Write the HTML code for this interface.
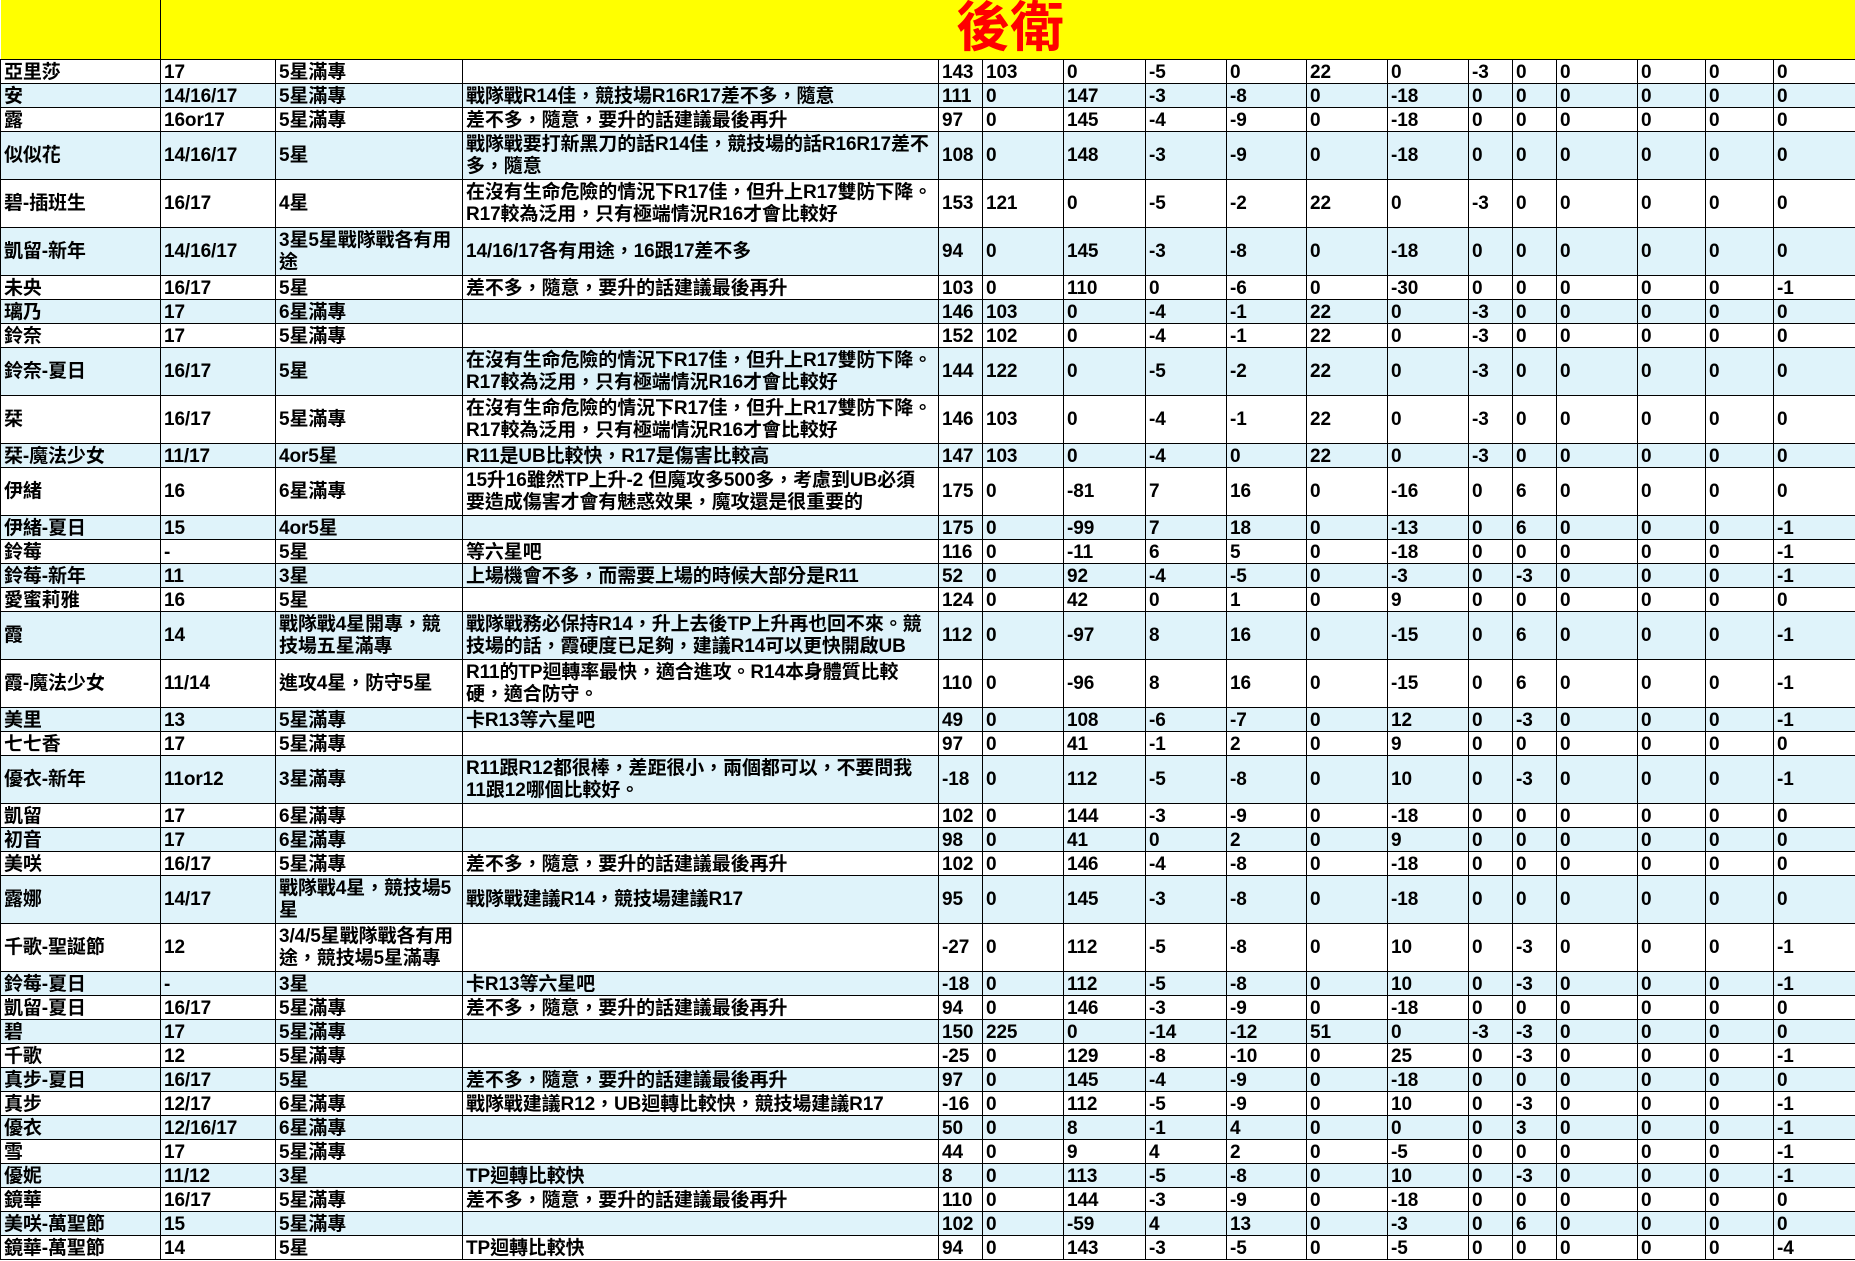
<!DOCTYPE html>
<html><head><meta charset="utf-8"><style>
html,body{margin:0;padding:0;background:#fff;}
body{width:1855px;height:1261px;overflow:hidden;font-family:"Liberation Sans","Noto Sans CJK TC",sans-serif;font-weight:bold;font-size:19px;color:#000;position:relative}
table{border-collapse:collapse;table-layout:fixed;width:1855px;}
td{border:1px solid #000;padding:0 0 0 3px;height:23px;line-height:21px;vertical-align:bottom;white-space:nowrap;overflow:hidden;letter-spacing:-0.1px}
tr.d td{height:47px;vertical-align:middle;}
tr.d td.t{line-height:22px;vertical-align:middle}
tr:nth-child(odd) td{background:#dff3fa}
tr.h td{background:#ffff00;height:59px;border-top:none;}
.title{color:#ff0000;font-size:54px;line-height:60px;position:absolute;left:956px;top:-2px;letter-spacing:0;z-index:5}
</style></head><body>
<div class="title">後衛</div>
<table>
<colgroup><col style="width:160px"><col style="width:115px"><col style="width:187px"><col style="width:476px"><col style="width:44px"><col style="width:81px"><col style="width:82px"><col style="width:81px"><col style="width:80px"><col style="width:81px"><col style="width:81px"><col style="width:44px"><col style="width:44px"><col style="width:81px"><col style="width:68px"><col style="width:68px"><col style="width:82px"></colgroup>
<tr class="h"><td style="border-left:none"></td><td colspan="16" style="border-right:none"></td></tr>
<tr><td>亞里莎</td><td>17</td><td>5星滿專</td><td></td><td>143</td><td>103</td><td>0</td><td>-5</td><td>0</td><td>22</td><td>0</td><td>-3</td><td>0</td><td>0</td><td>0</td><td>0</td><td>0</td></tr>
<tr><td>安</td><td>14/16/17</td><td>5星滿專</td><td>戰隊戰R14佳，競技場R16R17差不多，隨意</td><td>111</td><td>0</td><td>147</td><td>-3</td><td>-8</td><td>0</td><td>-18</td><td>0</td><td>0</td><td>0</td><td>0</td><td>0</td><td>0</td></tr>
<tr><td>露</td><td>16or17</td><td>5星滿專</td><td>差不多，隨意，要升的話建議最後再升</td><td>97</td><td>0</td><td>145</td><td>-4</td><td>-9</td><td>0</td><td>-18</td><td>0</td><td>0</td><td>0</td><td>0</td><td>0</td><td>0</td></tr>
<tr class="d"><td>似似花</td><td>14/16/17</td><td>5星</td><td class="t">戰隊戰要打新黑刀的話R14佳，競技場的話R16R17差不<br>多，隨意</td><td>108</td><td>0</td><td>148</td><td>-3</td><td>-9</td><td>0</td><td>-18</td><td>0</td><td>0</td><td>0</td><td>0</td><td>0</td><td>0</td></tr>
<tr class="d"><td>碧-插班生</td><td>16/17</td><td>4星</td><td class="t">在沒有生命危險的情況下R17佳，但升上R17雙防下降。<br>R17較為泛用，只有極端情況R16才會比較好</td><td>153</td><td>121</td><td>0</td><td>-5</td><td>-2</td><td>22</td><td>0</td><td>-3</td><td>0</td><td>0</td><td>0</td><td>0</td><td>0</td></tr>
<tr class="d"><td>凱留-新年</td><td>14/16/17</td><td class="t">3星5星戰隊戰各有用<br>途</td><td>14/16/17各有用途，16跟17差不多</td><td>94</td><td>0</td><td>145</td><td>-3</td><td>-8</td><td>0</td><td>-18</td><td>0</td><td>0</td><td>0</td><td>0</td><td>0</td><td>0</td></tr>
<tr><td>未央</td><td>16/17</td><td>5星</td><td>差不多，隨意，要升的話建議最後再升</td><td>103</td><td>0</td><td>110</td><td>0</td><td>-6</td><td>0</td><td>-30</td><td>0</td><td>0</td><td>0</td><td>0</td><td>0</td><td>-1</td></tr>
<tr><td>璃乃</td><td>17</td><td>6星滿專</td><td></td><td>146</td><td>103</td><td>0</td><td>-4</td><td>-1</td><td>22</td><td>0</td><td>-3</td><td>0</td><td>0</td><td>0</td><td>0</td><td>0</td></tr>
<tr><td>鈴奈</td><td>17</td><td>5星滿專</td><td></td><td>152</td><td>102</td><td>0</td><td>-4</td><td>-1</td><td>22</td><td>0</td><td>-3</td><td>0</td><td>0</td><td>0</td><td>0</td><td>0</td></tr>
<tr class="d"><td>鈴奈-夏日</td><td>16/17</td><td>5星</td><td class="t">在沒有生命危險的情況下R17佳，但升上R17雙防下降。<br>R17較為泛用，只有極端情況R16才會比較好</td><td>144</td><td>122</td><td>0</td><td>-5</td><td>-2</td><td>22</td><td>0</td><td>-3</td><td>0</td><td>0</td><td>0</td><td>0</td><td>0</td></tr>
<tr class="d"><td>栞</td><td>16/17</td><td>5星滿專</td><td class="t">在沒有生命危險的情況下R17佳，但升上R17雙防下降。<br>R17較為泛用，只有極端情況R16才會比較好</td><td>146</td><td>103</td><td>0</td><td>-4</td><td>-1</td><td>22</td><td>0</td><td>-3</td><td>0</td><td>0</td><td>0</td><td>0</td><td>0</td></tr>
<tr><td>栞-魔法少女</td><td>11/17</td><td>4or5星</td><td>R11是UB比較快，R17是傷害比較高</td><td>147</td><td>103</td><td>0</td><td>-4</td><td>0</td><td>22</td><td>0</td><td>-3</td><td>0</td><td>0</td><td>0</td><td>0</td><td>0</td></tr>
<tr class="d"><td>伊緒</td><td>16</td><td>6星滿專</td><td class="t">15升16雖然TP上升-2 但魔攻多500多，考慮到UB必須<br>要造成傷害才會有魅惑效果，魔攻還是很重要的</td><td>175</td><td>0</td><td>-81</td><td>7</td><td>16</td><td>0</td><td>-16</td><td>0</td><td>6</td><td>0</td><td>0</td><td>0</td><td>0</td></tr>
<tr><td>伊緒-夏日</td><td>15</td><td>4or5星</td><td></td><td>175</td><td>0</td><td>-99</td><td>7</td><td>18</td><td>0</td><td>-13</td><td>0</td><td>6</td><td>0</td><td>0</td><td>0</td><td>-1</td></tr>
<tr><td>鈴莓</td><td>-</td><td>5星</td><td>等六星吧</td><td>116</td><td>0</td><td>-11</td><td>6</td><td>5</td><td>0</td><td>-18</td><td>0</td><td>0</td><td>0</td><td>0</td><td>0</td><td>-1</td></tr>
<tr><td>鈴莓-新年</td><td>11</td><td>3星</td><td>上場機會不多，而需要上場的時候大部分是R11</td><td>52</td><td>0</td><td>92</td><td>-4</td><td>-5</td><td>0</td><td>-3</td><td>0</td><td>-3</td><td>0</td><td>0</td><td>0</td><td>-1</td></tr>
<tr><td>愛蜜莉雅</td><td>16</td><td>5星</td><td></td><td>124</td><td>0</td><td>42</td><td>0</td><td>1</td><td>0</td><td>9</td><td>0</td><td>0</td><td>0</td><td>0</td><td>0</td><td>0</td></tr>
<tr class="d"><td>霞</td><td>14</td><td class="t">戰隊戰4星開專，競<br>技場五星滿專</td><td class="t">戰隊戰務必保持R14，升上去後TP上升再也回不來。競<br>技場的話，霞硬度已足夠，建議R14可以更快開啟UB</td><td>112</td><td>0</td><td>-97</td><td>8</td><td>16</td><td>0</td><td>-15</td><td>0</td><td>6</td><td>0</td><td>0</td><td>0</td><td>-1</td></tr>
<tr class="d"><td>霞-魔法少女</td><td>11/14</td><td>進攻4星，防守5星</td><td class="t">R11的TP迴轉率最快，適合進攻。R14本身體質比較<br>硬，適合防守。</td><td>110</td><td>0</td><td>-96</td><td>8</td><td>16</td><td>0</td><td>-15</td><td>0</td><td>6</td><td>0</td><td>0</td><td>0</td><td>-1</td></tr>
<tr><td>美里</td><td>13</td><td>5星滿專</td><td>卡R13等六星吧</td><td>49</td><td>0</td><td>108</td><td>-6</td><td>-7</td><td>0</td><td>12</td><td>0</td><td>-3</td><td>0</td><td>0</td><td>0</td><td>-1</td></tr>
<tr><td>七七香</td><td>17</td><td>5星滿專</td><td></td><td>97</td><td>0</td><td>41</td><td>-1</td><td>2</td><td>0</td><td>9</td><td>0</td><td>0</td><td>0</td><td>0</td><td>0</td><td>0</td></tr>
<tr class="d"><td>優衣-新年</td><td>11or12</td><td>3星滿專</td><td class="t">R11跟R12都很棒，差距很小，兩個都可以，不要問我<br>11跟12哪個比較好。</td><td>-18</td><td>0</td><td>112</td><td>-5</td><td>-8</td><td>0</td><td>10</td><td>0</td><td>-3</td><td>0</td><td>0</td><td>0</td><td>-1</td></tr>
<tr><td>凱留</td><td>17</td><td>6星滿專</td><td></td><td>102</td><td>0</td><td>144</td><td>-3</td><td>-9</td><td>0</td><td>-18</td><td>0</td><td>0</td><td>0</td><td>0</td><td>0</td><td>0</td></tr>
<tr><td>初音</td><td>17</td><td>6星滿專</td><td></td><td>98</td><td>0</td><td>41</td><td>0</td><td>2</td><td>0</td><td>9</td><td>0</td><td>0</td><td>0</td><td>0</td><td>0</td><td>0</td></tr>
<tr><td>美咲</td><td>16/17</td><td>5星滿專</td><td>差不多，隨意，要升的話建議最後再升</td><td>102</td><td>0</td><td>146</td><td>-4</td><td>-8</td><td>0</td><td>-18</td><td>0</td><td>0</td><td>0</td><td>0</td><td>0</td><td>0</td></tr>
<tr class="d"><td>露娜</td><td>14/17</td><td class="t">戰隊戰4星，競技場5<br>星</td><td>戰隊戰建議R14，競技場建議R17</td><td>95</td><td>0</td><td>145</td><td>-3</td><td>-8</td><td>0</td><td>-18</td><td>0</td><td>0</td><td>0</td><td>0</td><td>0</td><td>0</td></tr>
<tr class="d"><td>千歌-聖誕節</td><td>12</td><td class="t">3/4/5星戰隊戰各有用<br>途，競技場5星滿專</td><td></td><td>-27</td><td>0</td><td>112</td><td>-5</td><td>-8</td><td>0</td><td>10</td><td>0</td><td>-3</td><td>0</td><td>0</td><td>0</td><td>-1</td></tr>
<tr><td>鈴莓-夏日</td><td>-</td><td>3星</td><td>卡R13等六星吧</td><td>-18</td><td>0</td><td>112</td><td>-5</td><td>-8</td><td>0</td><td>10</td><td>0</td><td>-3</td><td>0</td><td>0</td><td>0</td><td>-1</td></tr>
<tr><td>凱留-夏日</td><td>16/17</td><td>5星滿專</td><td>差不多，隨意，要升的話建議最後再升</td><td>94</td><td>0</td><td>146</td><td>-3</td><td>-9</td><td>0</td><td>-18</td><td>0</td><td>0</td><td>0</td><td>0</td><td>0</td><td>0</td></tr>
<tr><td>碧</td><td>17</td><td>5星滿專</td><td></td><td>150</td><td>225</td><td>0</td><td>-14</td><td>-12</td><td>51</td><td>0</td><td>-3</td><td>-3</td><td>0</td><td>0</td><td>0</td><td>0</td></tr>
<tr><td>千歌</td><td>12</td><td>5星滿專</td><td></td><td>-25</td><td>0</td><td>129</td><td>-8</td><td>-10</td><td>0</td><td>25</td><td>0</td><td>-3</td><td>0</td><td>0</td><td>0</td><td>-1</td></tr>
<tr><td>真步-夏日</td><td>16/17</td><td>5星</td><td>差不多，隨意，要升的話建議最後再升</td><td>97</td><td>0</td><td>145</td><td>-4</td><td>-9</td><td>0</td><td>-18</td><td>0</td><td>0</td><td>0</td><td>0</td><td>0</td><td>0</td></tr>
<tr><td>真步</td><td>12/17</td><td>6星滿專</td><td>戰隊戰建議R12，UB迴轉比較快，競技場建議R17</td><td>-16</td><td>0</td><td>112</td><td>-5</td><td>-9</td><td>0</td><td>10</td><td>0</td><td>-3</td><td>0</td><td>0</td><td>0</td><td>-1</td></tr>
<tr><td>優衣</td><td>12/16/17</td><td>6星滿專</td><td></td><td>50</td><td>0</td><td>8</td><td>-1</td><td>4</td><td>0</td><td>0</td><td>0</td><td>3</td><td>0</td><td>0</td><td>0</td><td>-1</td></tr>
<tr><td>雪</td><td>17</td><td>5星滿專</td><td></td><td>44</td><td>0</td><td>9</td><td>4</td><td>2</td><td>0</td><td>-5</td><td>0</td><td>0</td><td>0</td><td>0</td><td>0</td><td>-1</td></tr>
<tr><td>優妮</td><td>11/12</td><td>3星</td><td>TP迴轉比較快</td><td>8</td><td>0</td><td>113</td><td>-5</td><td>-8</td><td>0</td><td>10</td><td>0</td><td>-3</td><td>0</td><td>0</td><td>0</td><td>-1</td></tr>
<tr><td>鏡華</td><td>16/17</td><td>5星滿專</td><td>差不多，隨意，要升的話建議最後再升</td><td>110</td><td>0</td><td>144</td><td>-3</td><td>-9</td><td>0</td><td>-18</td><td>0</td><td>0</td><td>0</td><td>0</td><td>0</td><td>0</td></tr>
<tr><td>美咲-萬聖節</td><td>15</td><td>5星滿專</td><td></td><td>102</td><td>0</td><td>-59</td><td>4</td><td>13</td><td>0</td><td>-3</td><td>0</td><td>6</td><td>0</td><td>0</td><td>0</td><td>0</td></tr>
<tr><td>鏡華-萬聖節</td><td>14</td><td>5星</td><td>TP迴轉比較快</td><td>94</td><td>0</td><td>143</td><td>-3</td><td>-5</td><td>0</td><td>-5</td><td>0</td><td>0</td><td>0</td><td>0</td><td>0</td><td>-4</td></tr>
</table>
</body></html>
